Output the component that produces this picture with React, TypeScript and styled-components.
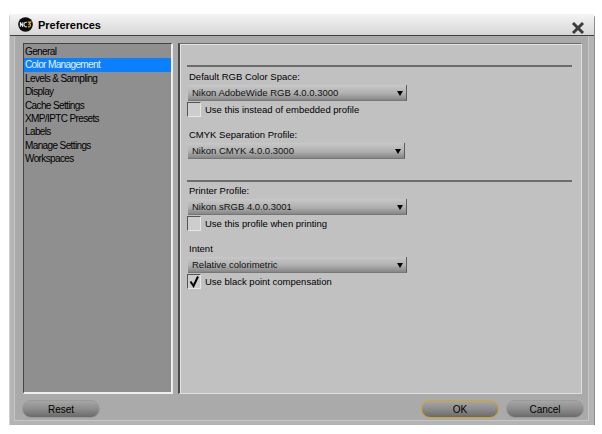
import React from "react";
import styled, { createGlobalStyle } from "styled-components";

const categories = [
  "General",
  "Color Management",
  "Levels & Sampling",
  "Display",
  "Cache Settings",
  "XMP/IPTC Presets",
  "Labels",
  "Manage Settings",
  "Workspaces",
];

const App: React.FC = () => {
  return (
    <>
      <GlobalStyle />
      <Window>
        <TitleBar>
          <Logo viewBox="0 0 16 16">
            <circle cx="8" cy="8" r="7.8" fill="#0a0a0a" />
            <path d="M2.5 10.5v-5l2.6 5v-5" fill="none" stroke="#eee" strokeWidth="1.1" />
            <path d="M9.5 5.6a2.5 2.5 0 1 0 0 4.8" fill="none" stroke="#eee" strokeWidth="1.1" />
            <path d="M10.5 5.5h3l-1.6 2c1.8 0 1.8 3-.4 3h-1" fill="none" stroke="#e8b923" strokeWidth="1.3" />
          </Logo>
          <Title>Preferences</Title>
          <CloseIcon viewBox="0 0 14 14">
            <path d="M2 2l10 10M12 2L2 12" stroke="#3c3c3c" strokeWidth="3" />
          </CloseIcon>
        </TitleBar>
        <Body>
          <Columns>
            <CategoryList>
              {categories.map((name) => (
                <CategoryItem key={name} $selected={name === "Color Management"}>
                  {name}
                </CategoryItem>
              ))}
            </CategoryList>
            <SettingsPanel>
              <Group>
                <Label>Default RGB Color Space:</Label>
                <Select>Nikon AdobeWide RGB 4.0.0.3000<Arrow /></Select>
                <CheckRow>
                  <CheckBox />
                  Use this instead of embedded profile
                </CheckRow>
              </Group>
              <Group $top={11}>
                <Label>CMYK Separation Profile:</Label>
                <Select $narrow>Nikon CMYK 4.0.0.3000<Arrow /></Select>
              </Group>
              <Group $top={21} $rule>
                <Label>Printer Profile:</Label>
                <Select>Nikon sRGB 4.0.0.3001<Arrow /></Select>
                <CheckRow>
                  <CheckBox />
                  Use this profile when printing
                </CheckRow>
              </Group>
              <Group $top={11}>
                <Label>Intent</Label>
                <Select>Relative colorimetric<Arrow /></Select>
                <CheckRow>
                  <CheckBox>
                    <svg width="12" height="13" viewBox="0 0 12 13">
                      <path d="M2.5 6.5l3 4.5L10 1.5" fill="none" stroke="#000" strokeWidth="2" />
                    </svg>
                  </CheckBox>
                  Use black point compensation
                </CheckRow>
              </Group>
            </SettingsPanel>
          </Columns>
          <Footer>
            <PillButton>Reset</PillButton>
            <FooterRight>
              <PillButton $focused>OK</PillButton>
              <PillButton>Cancel</PillButton>
            </FooterRight>
          </Footer>
        </Body>
      </Window>
    </>
  );
};

export default App;

const GlobalStyle = createGlobalStyle`
  html, body {
    margin: 0;
    padding: 0;
    background: #fff;
  }
  body {
    font-family: "Liberation Sans", Arial, sans-serif;
    color: #000;
  }
`;

const Window = styled.div`
  width: 584px;
  height: 411px;
  margin: 14px 0 0 10px;
  display: flex;
  flex-direction: column;
  border-radius: 3px 3px 0 0;
  box-shadow: 1px 1px 0 #8c8c8c, -1px 0 0 #d0d0d0;
`;

const TitleBar = styled.div`
  height: 21px;
  flex: none;
  display: flex;
  align-items: center;
  padding: 0 9px 0 8px;
  background: linear-gradient(180deg, #f4f4f4 0%, #d6d6d6 100%);
  border-bottom: 1px solid #3f3f3f;
`;

const Logo = styled.svg`
  width: 15px;
  height: 15px;
`;

const Title = styled.div`
  margin-left: 5px;
  font-size: 11px;
  font-weight: bold;
  flex: 1;
`;

const CloseIcon = styled.svg`
  width: 14px;
  height: 14px;
  margin-top: 6px;
`;

const Body = styled.div`
  flex: 1;
  display: flex;
  flex-direction: column;
  background: #aaaaaa;
  padding: 7px 7px 3px 9px;
  border: solid #b4b4b4;
  border-width: 0 5px 4px 4px;
  box-shadow: inset 1px 0 0 #c6c6c6, inset -1px -1px 0 #c6c6c6;
`;

const Columns = styled.div`
  flex: 1;
  display: flex;
  gap: 5px;
  min-height: 0;
`;

const CategoryList = styled.div`
  width: 150px;
  flex: none;
  background: #8f8f8f;
  border-top: 1px solid #444;
  border-left: 1px solid #444;
  border-right: 2px solid #eee;
  border-bottom: 2px solid #eee;
  padding-top: 1px;
  box-sizing: border-box;
`;

const CategoryItem = styled.div<{ $selected?: boolean }>`
  height: 13.4px;
  line-height: 13px;
  font-size: 10px;
  letter-spacing: -0.62px;
  padding-left: 1px;
  color: ${(props) => (props.$selected ? "#e8f2ff" : "#000")};
  background: ${(props) => (props.$selected ? "#0a80ff" : "transparent")};
`;

const SettingsPanel = styled.div`
  flex: 1;
  background: #c1c1c1;
  border-top: 1px solid #6a6a6a;
  border-left: 2px solid #4a4a4a;
  border-right: 1px solid #dedede;
  border-bottom: 1px solid #dedede;
  box-shadow: inset 1px 1px 0 #e4e4e4;
  padding: 21px 9px 0 7px;
  box-sizing: border-box;
`;

const Group = styled.div<{ $top?: number; $rule?: boolean }>`
  margin-top: ${(props) => props.$top ?? 0}px;
  border-top: ${(props) => (props.$rule ? "2px solid #6c6c6c" : "none")};
  padding-top: ${(props) => (props.$rule ? "1px" : "0")};
  &:first-child {
    border-top: 2px solid #6c6c6c;
    padding-top: 2px;
  }
`;

const Label = styled.div`
  height: 14px;
  line-height: 16px;
  font-size: 9.5px;
  padding-left: 2px;
  margin-bottom: 2px;
`;

const Select = styled.div<{ $narrow?: boolean }>`
  position: relative;
  width: ${(props) => (props.$narrow ? "217px" : "219px")};
  height: 16px;
  margin-left: 1px;
  padding-left: 4px;
  box-sizing: border-box;
  line-height: 15px;
  font-size: 9.5px;
  color: #111;
  background: linear-gradient(180deg, #c8c8c8 0%, #b0b0b0 55%, #868686 100%);
  border-right: 1px solid #5e5e5e;
  border-bottom: 1px solid #777;
`;

const Arrow = styled.span`
  position: absolute;
  right: 3px;
  top: 6px;
  width: 0;
  height: 0;
  border-left: 3.5px solid transparent;
  border-right: 3.5px solid transparent;
  border-top: 5px solid #000;
`;

const CheckRow = styled.div`
  display: flex;
  align-items: center;
  height: 14px;
  margin-top: 1px;
  font-size: 9.5px;
`;

const CheckBox = styled.span`
  width: 12px;
  height: 13px;
  flex: none;
  display: flex;
  align-items: center;
  justify-content: center;
  margin-right: 4px;
  background: #cdcdcd;
  border-top: 1px solid #555;
  border-left: 1px solid #555;
  border-right: 1px solid #e6e6e6;
  border-bottom: 1px solid #e6e6e6;
`;

const Footer = styled.div`
  height: 18px;
  flex: none;
  margin-top: 6px;
  margin-left: -1px;
  display: flex;
  justify-content: space-between;
`;

const FooterRight = styled.div`
  display: flex;
  gap: 7px;
  margin-right: -2px;
`;

const PillButton = styled.div<{ $focused?: boolean }>`
  width: 78px;
  height: 18px;
  box-sizing: border-box;
  border-radius: 9px;
  display: flex;
  align-items: center;
  justify-content: center;
  font-size: 10px;
  color: #000;
  background: linear-gradient(180deg, #a6a6a6 0%, #8c8c8c 50%, #6a6a6a 100%);
  border: 1px solid ${(props) => (props.$focused ? "#d6a520" : "#9a9a9a")};
`;
